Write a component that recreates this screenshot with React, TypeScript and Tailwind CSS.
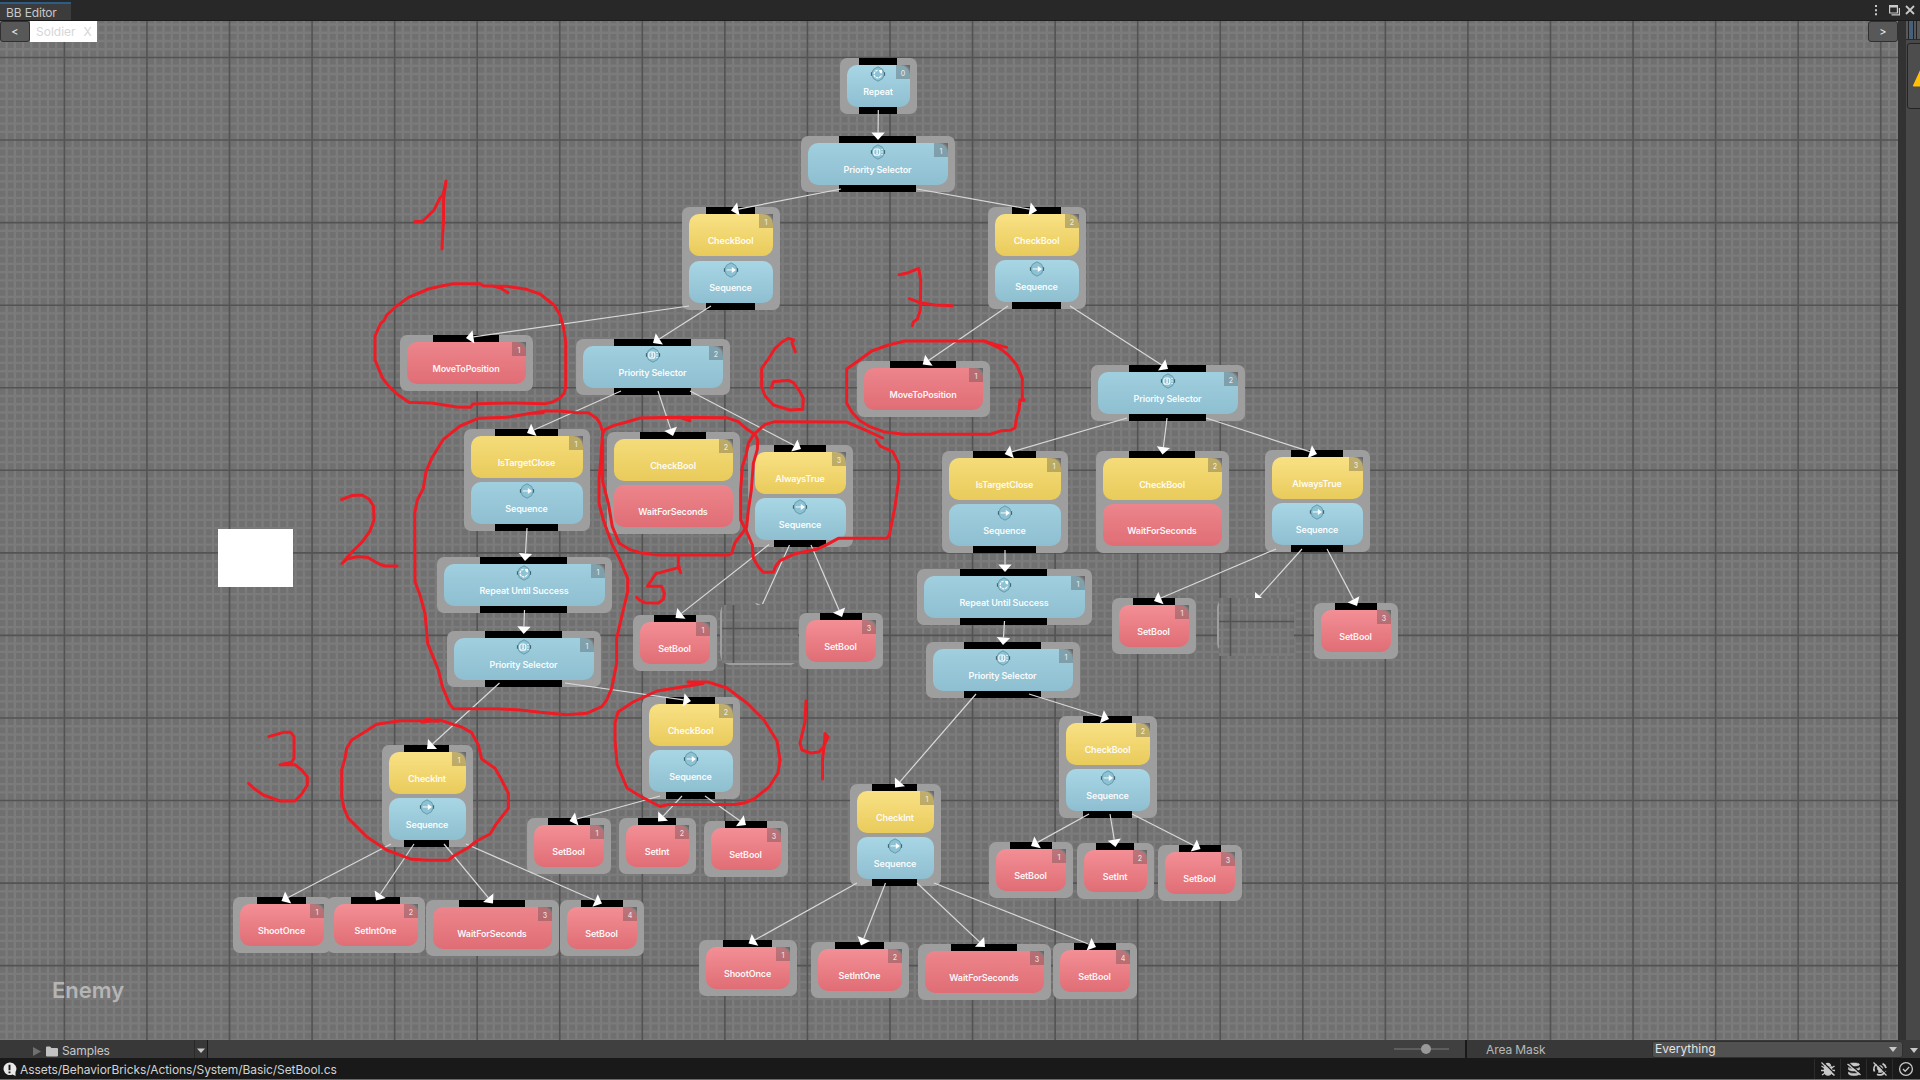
import React from "react";

type Kind = "repeat" | "selector" | "sequence";
type Block = { label: string; tone: "blue" | "yellow" | "red"; icon?: Kind };
type TreeNode = { x: number; y: number; w: number; n: number; blocks: Block[]; out?: boolean; gap?: number };

const CELL = 82.56;
const GRID_X = 64.4;
const GRID_Y = 57.5;

const rep: Block = { label: "Repeat", tone: "blue", icon: "repeat" };
const sel: Block = { label: "Priority Selector", tone: "blue", icon: "selector" };
const rus: Block = { label: "Repeat Until Success", tone: "blue", icon: "repeat" };
const seq: Block = { label: "Sequence", tone: "blue", icon: "sequence" };
const cond = (label: string): Block => ({ label, tone: "yellow" });
const act = (label: string): Block => ({ label, tone: "red" });

const nodes: TreeNode[] = [
  { x: 840, y: 58, w: 77, n: 0, blocks: [rep], out: true },
  { x: 801, y: 136, w: 154, n: 1, blocks: [sel], out: true },
  { x: 682, y: 207, w: 98, n: 1, blocks: [cond("CheckBool"), seq], out: true, gap: 5 },
  { x: 988, y: 207, w: 98, n: 2, blocks: [cond("CheckBool"), seq], out: true },
  { x: 400, y: 335, w: 133, n: 1, blocks: [act("MoveToPosition")] },
  { x: 576, y: 339, w: 154, n: 2, blocks: [sel], out: true },
  { x: 464, y: 429, w: 126, n: 1, blocks: [cond("IsTargetClose"), seq], out: true },
  { x: 607, y: 432, w: 133, n: 2, blocks: [cond("CheckBool"), act("WaitForSeconds")] },
  { x: 748, y: 445, w: 105, n: 3, blocks: [cond("AlwaysTrue"), seq], out: true },
  { x: 437, y: 557, w: 175, n: 1, blocks: [rus], out: true },
  { x: 447, y: 631, w: 154, n: 1, blocks: [sel], out: true },
  { x: 633, y: 615, w: 84, n: 1, blocks: [act("SetBool")] },
  { x: 799, y: 613, w: 84, n: 3, blocks: [act("SetBool")] },
  { x: 642, y: 697, w: 98, n: 2, blocks: [cond("CheckBool"), seq], out: true },
  { x: 382, y: 745, w: 91, n: 1, blocks: [cond("CheckInt"), seq], out: true },
  { x: 233, y: 897, w: 98, n: 1, blocks: [act("ShootOnce")] },
  { x: 327, y: 897, w: 98, n: 2, blocks: [act("SetIntOne")] },
  { x: 426, y: 900, w: 133, n: 3, blocks: [act("WaitForSeconds")] },
  { x: 560, y: 900, w: 84, n: 4, blocks: [act("SetBool")] },
  { x: 527, y: 818, w: 84, n: 1, blocks: [act("SetBool")] },
  { x: 619, y: 818, w: 77, n: 2, blocks: [act("SetInt")] },
  { x: 704, y: 821, w: 84, n: 3, blocks: [act("SetBool")] },
  { x: 857, y: 361, w: 133, n: 1, blocks: [act("MoveToPosition")] },
  { x: 1091, y: 365, w: 154, n: 2, blocks: [sel], out: true },
  { x: 942, y: 451, w: 126, n: 1, blocks: [cond("IsTargetClose"), seq], out: true },
  { x: 1096, y: 451, w: 133, n: 2, blocks: [cond("CheckBool"), act("WaitForSeconds")] },
  { x: 1265, y: 450, w: 105, n: 3, blocks: [cond("AlwaysTrue"), seq], out: true },
  { x: 917, y: 569, w: 175, n: 1, blocks: [rus], out: true },
  { x: 926, y: 642, w: 154, n: 1, blocks: [sel], out: true },
  { x: 1112, y: 598, w: 84, n: 1, blocks: [act("SetBool")] },
  { x: 1314, y: 603, w: 84, n: 3, blocks: [act("SetBool")] },
  { x: 1059, y: 716, w: 98, n: 2, blocks: [cond("CheckBool"), seq], out: true },
  { x: 850, y: 784, w: 91, n: 1, blocks: [cond("CheckInt"), seq], out: true },
  { x: 989, y: 842, w: 84, n: 1, blocks: [act("SetBool")] },
  { x: 1077, y: 843, w: 77, n: 2, blocks: [act("SetInt")] },
  { x: 1158, y: 845, w: 84, n: 3, blocks: [act("SetBool")] },
  { x: 699, y: 940, w: 98, n: 1, blocks: [act("ShootOnce")] },
  { x: 811, y: 942, w: 98, n: 2, blocks: [act("SetIntOne")] },
  { x: 918, y: 944, w: 133, n: 3, blocks: [act("WaitForSeconds")] },
  { x: 1053, y: 943, w: 84, n: 4, blocks: [act("SetBool")] },
];

const edges: number[][] = [
  [878.3, 110, 878, 140],
  [841, 189, 731, 210.5],
  [917, 189, 1037, 210.5],
  [689, 306, 466, 338],
  [711, 306, 653, 343],
  [1008, 306, 922.7, 364.5],
  [1070, 306, 1168, 369],
  [621, 391, 527, 433],
  [658, 391, 673, 436],
  [690, 391, 801, 449],
  [1127, 418, 1004.7, 454],
  [1167, 418, 1162.5, 454.5],
  [1206, 418, 1317, 454],
  [527, 528, 525, 561],
  [524.5, 610, 523.7, 634],
  [499.5, 683, 427, 749],
  [565, 683, 691, 701],
  [1005, 550, 1005, 572],
  [1004.5, 621, 1003, 645],
  [976, 694, 895, 787.5],
  [1029, 694, 1109, 719],
  [769, 544.5, 675.5, 618],
  [811, 545, 842, 617],
  [1276, 549, 1154, 601],
  [1327, 549, 1357, 606],
  [391, 844, 281.5, 901],
  [414, 844, 376, 900.5],
  [444, 844, 493, 903.5],
  [466, 844, 602, 903.5],
  [660, 796, 569.5, 821],
  [682, 796, 658, 821.5],
  [705, 796, 746, 825],
  [1089, 814, 1031, 846],
  [1110, 814, 1115.5, 847],
  [1132, 814, 1200.5, 849],
  [857, 883, 748.5, 943.5],
  [885.5, 883, 861, 945.5],
  [917, 883, 985, 947],
  [934, 883, 1096, 947],
];

const inks: { o: [number, number]; s: number; p: string[] }[] = [
  {
    o: [0, 0],
    s: 1,
    p: [
      "415,221.5 422,221.5 427,217 434,210 438,202 440,198 443,195 446,181 443.5,200 443.5,222 442.5,236 442,249",
      "341.6,499.5 352,495.5 362,495 369,499 373.5,506 374,520 370,531 362,542 351,553 342,563.5 347,559 358,556.5 368,557.5 379,564 385,566 397,566",
      "703,683.5 688,682 708,682 727,688 747,703 764,720 777,741 780,760 778,773 769,787 754,799 744,803 735,804.5 700,804.5 668,804.5 660,806.5 640,796 627,788 617,764 615,740 615,723 618,712 633,702 657,691 688,686 703,683.5",
      "806,701 805,722 800,743 802,750 811,753 819,752 823.5,747 828,737 825,733.5 824.5,742 822.5,760 822.5,779",
    ],
  },
  {
    o: [360, 160],
    s: 1 / 3,
    p: [
      "444,398 425,386 400,378 370,377 360,371 280,371 240,379 205,387 170,402 145,412 110,438 80,465 72,482 62,490 45,528 45,600 68,655 90,683 115,705 147,727 215,729 290,741 332,742 338,732 400,730 470,729 555,731 580,725 600,714 612,700 617,683 617,545 610,500 600,465 582,435 540,402 500,388 440,379 400,379",
      "1306,575 1296,548 1301,540 1285,535 1265,547 1245,565 1225,597 1205,625 1205,680 1215,707 1240,735 1290,750 1328,748 1330,715 1318,692 1300,668 1285,661 1240,665 1234,683",
    ],
  },
  {
    o: [400, 420],
    s: 1 / 3,
    p: [
      "430,-22 400,-20 440,-28 480,-27 530,-22 565,-22 590,-5 600,10 608,35 603,110 597,180 597,250 610,300 635,370 660,420 683,475 683,515 665,590 650,655 650,730 635,805 620,840 605,860 560,880 500,884 420,877 360,870 290,866 160,866 148,850 127,800 115,750 83,670 75,580 60,525 45,485 44,280 52,240 70,205 78,155 95,115 130,58 180,18 235,-5 320,-8 380,-18 440,-28",
      "870,2 850,-7",
      "835,410 835,440 842,458",
      "838,442 780,458 768,460 755,480 742,499 785,499 793,520 790,538 775,549 735,548 720,541 710,532",
      "608,60 608,185 625,250 637,320 657,368",
    ],
  },
  {
    o: [620, 380],
    s: 1 / 3,
    p: [
      "-52,160 -45,148 -20,137 20,126 60,114 170,112 320,113 355,125 380,147 405,163 413,180 412,208 400,250 394,330 385,390 380,440 370,455 345,488 335,520 325,525 115,525 60,518 30,509 -4,488",
      "208,122 180,112",
      "788,174 740,152 680,126 465,125 435,133 400,165 385,190 378,225 367,260 362,330 362,420 380,455 397,495 400,535 415,560 430,577 460,577 467,558 480,542 525,521 590,508 622,493 655,475 800,475 808,465 816,425 825,380 836,300 836,250 818,215 780,198 768,180",
    ],
  },
  {
    o: [820, 260],
    s: 1 / 3,
    p: [
      "237,44 265,38 296,25 302,60 301,150 292,178 280,186 277,197",
      "268,116 300,128 345,135 397,137",
      "560,262 520,252 490,242 440,243 255,243 205,255 155,273 115,302 80,327 80,430 95,455 120,482 150,500 190,515 250,523 510,523 545,512 570,511 585,504 590,470 597,450 600,420 613,421 607,415 607,355 590,315 565,285 540,265 490,242",
    ],
  },
  {
    o: [220, 680],
    s: 1 / 3,
    p: [
      "146,170 190,157 212,157 222,170 222,235 215,247 180,254 225,254 245,270 262,290 262,315 245,342 225,363 180,363 130,345 105,328 86,310",
      "660,120 605,126 620,118 655,124 625,122 540,122 470,133 435,155 395,180 380,205 375,235 365,270 365,350 372,385 385,415 440,470 500,510 575,538 625,541 685,541 700,528 745,503 770,483 810,462 830,430 865,385 865,340 845,300 825,265 785,237 775,195 755,158 725,141 690,130 660,120",
    ],
  },
];

const tones = {
  blue: "bg-linear-to-b from-[#a8d6e5] to-[#8ebfd0]",
  yellow: "bg-linear-to-b from-[#f9e184] to-[#e9cb5b]",
  red: "bg-linear-to-b from-[#f38f96] to-[#e06d75]",
};

const wideTones = {
  blue: "bg-linear-to-b from-[#a0cfdf] to-[#8ebfd0]",
  yellow: "bg-linear-to-b from-[#f5dc79] to-[#e9cb5b]",
  red: "bg-linear-to-b from-[#ed858c] to-[#e06d75]",
};

function BlockIcon({ kind }: { kind: Kind }) {
  return (
    <svg width="16" height="16" viewBox="0 0 16 16" className="absolute left-1/2 top-[1px] -ml-[8.5px]">
      <path d="M8 .8 L12.6 3.4 L14.4 8 L12.6 12.6 L8 15.2 L3.4 12.6 L1.6 8 L3.4 3.4Z" fill="#8cc2d4" stroke="#6195a6" strokeWidth=".9" />
      <path d="M1.4 6.2v3.6M14.6 6.2v3.6" stroke="#3c5f6c" strokeWidth="1" />
      {kind === "sequence" && (
        <g fill="#fff">
          <rect x="3.6" y="7.4" width="6" height="1.1" opacity=".85" />
          <path d="M8.8 5v6L13 8z" />
        </g>
      )}
      {kind === "repeat" && (
        <g>
          <path d="M7.6 4.4A3.7 3.7 0 1 0 11.4 9" fill="none" stroke="#f4fbfd" strokeWidth="1.3" strokeDasharray="2.4 .7" />
          <path d="M8.8 4h3.2v3.4L10 7z" fill="#fff" />
        </g>
      )}
      {kind === "selector" && (
        <g fill="none" stroke="#f4fbfd">
          <rect x="3.8" y="5" width="6" height="6.2" rx="2" strokeWidth="1.2" />
          <path d="M5.8 7h2M6 9.2h2M7.2 5v5" strokeWidth=".9" />
          <path d="M11 5.4h2M11 8h2M11 10.6h2" strokeWidth="1" strokeOpacity=".75" />
        </g>
      )}
    </svg>
  );
}

function NodeView({ node }: { node: TreeNode }) {
  const palette = node.w > 120 ? wideTones : tones;
  const port = { width: Math.floor(node.w / 2), marginLeft: Math.floor(node.w / 4) - 7 };
  return (
    <div
      className="absolute flex flex-col rounded-[7px] bg-[#9e9e9e] px-[7px]"
      style={{ left: node.x, top: node.y, width: node.w }}
    >
      <div className="h-[7px] bg-black" style={port} />
      <div className="flex flex-col" style={{ gap: node.gap ?? 4 }}>
        {node.blocks.map((b, i) => (
          <div key={i} className={"relative h-[42px] rounded-[10px] " + palette[b.tone]}>
            {b.icon && <BlockIcon kind={b.icon} />}
            <div className="absolute inset-x-0 top-[20px] pr-[1px] text-center text-[9px] leading-[14px] font-semibold tracking-[-0.15px] whitespace-nowrap text-white/95">
              {b.label}
            </div>
            {i === 0 && (
              <div className="absolute right-0 top-0 h-[14px] w-[14px] bg-[#3c3c3c]/30">
                <svg width="5" height="5" className="absolute right-0 top-0">
                  <path d="M0 0h5v5Q4 1.500 0 0Z" fill="#5b5b5b" fillOpacity=".6" />
                </svg>
                <div className="absolute left-[2px] top-[4px] w-[10px] text-center text-[7px] leading-[9px] font-medium text-white/75">
                  {node.n}
                </div>
              </div>
            )}
          </div>
        ))}
      </div>
      <div className={"h-[7px] " + (node.out ? "bg-black" : "")} style={port} />
    </div>
  );
}

function GridLines({ x0, y0, x1, y1, gx, gy }: { x0: number; y0: number; x1: number; y1: number; gx: number; gy: number }) {
  const step = CELL / 10;
  const minorV: number[] = [];
  const minorH: number[] = [];
  const majorV: number[] = [];
  const majorH: number[] = [];
  for (let i = Math.ceil((x0 - gx) / step); gx + i * step < x1; i++) (i % 10 === 0 ? majorV : minorV).push(gx + i * step);
  for (let i = Math.ceil((y0 - gy) / step); gy + i * step < y1; i++) (i % 10 === 0 ? majorH : minorH).push(gy + i * step);
  return (
    <g>
      <rect x={x0} y={y0} width={x1 - x0} height={y1 - y0} fill="#717071" />
      <path d={minorV.map((x) => `M${x.toFixed(2)} ${y0}V${y1}`).join("")} stroke="#7b7c7b" strokeWidth="2.300" />
      <path d={minorH.map((y) => `M${x0} ${y.toFixed(2)}H${x1}`).join("")} stroke="#7c7b7c" strokeWidth="2.300" />
      <path
        d={majorV.map((x) => `M${x.toFixed(2)} ${y0}V${y1}`).join("") + majorH.map((y) => `M${x0} ${y.toFixed(2)}H${x1}`).join("")}
        stroke="#545354"
        strokeWidth="1.600"
      />
    </g>
  );
}

function Arrow({ e }: { e: number[] }) {
  const [x1, y1, x2, y2] = e;
  const len = Math.hypot(x2 - x1, y2 - y1);
  const ux = (x2 - x1) / len;
  const uy = (y2 - y1) / len;
  const bx = x2 - ux * 7.5;
  const by = y2 - uy * 7.5;
  return (
    <g>
      <path d={`M${x1} ${y1}L${bx} ${by}`} stroke="#d9d9d9" strokeWidth="1.200" />
      <path d={`M${x2} ${y2}L${bx - uy * 6.7} ${by + ux * 6.7}L${bx + uy * 6.7} ${by - ux * 6.7}Z`} fill="#fff" />
    </g>
  );
}

function Canvas() {
  return (
    <div className="relative h-full w-[1898px] shrink-0 overflow-hidden bg-[#717071]">
      <div className="absolute -top-[21px] left-0 h-[1061px] w-[1898px]">
        <svg width="1898" height="1061" className="absolute inset-0">
          <GridLines x0={0} y0={21} x1={1898} y1={1061} gx={GRID_X} gy={GRID_Y} />
        </svg>
        <div className="absolute left-[52px] top-[976px] text-[22px] leading-[28px] font-semibold text-[#b5b5b5]">Enemy</div>
        {nodes.map((n, i) => (
          <NodeView key={i} node={n} />
        ))}
        <svg width="1898" height="1061" className="absolute inset-0">
          {edges.map((e, i) => (
            <Arrow key={i} e={e} />
          ))}
          <path d="M789.500 545L762.500 604M1302 549L1258 598" stroke="#d9d9d9" strokeWidth="1.200" />
          <path d="M1255 592l7 6h-7zM755 603.500l6 .8-4 .2z" fill="#fff" />
          <path d="M720 612v42q1 6 2 6v-54zM724 663h71l-4 2h-62zM1219 602v47q-2-2-2-6v-36q0-3 2-5z" fill="#9e9e9e" />
          <GridLines x0={722} y0={605} x1={798} y1={663} gx={733.5} gy={628.5} />
          <GridLines x0={1219} y0={598} x1={1294} y1={656} gx={1230.5} gy={621.5} />
          {inks.map((g, i) => (
            <g
              key={i}
              transform={`translate(${g.o[0]} ${g.o[1]}) scale(${g.s})`}
              fill="none"
              stroke="#ed1c24"
              strokeWidth={3 / g.s}
              strokeLinecap="round"
              strokeLinejoin="round"
            >
              {g.p.map((p, j) => (
                <polyline key={j} points={p} />
              ))}
            </g>
          ))}
        </svg>
        <div className="absolute left-[218px] top-[529px] h-[58px] w-[75px] bg-white" />
      </div>
      <div className="relative flex h-[21px] items-start justify-between">
        <div className="flex">
          <div className="flex h-[21px] w-[30px] items-center justify-center rounded-[3px] border border-[#303030] bg-[#585858] pt-[2px] text-[11px] text-[#eee]">&lt;</div>
          <div className="flex h-[21px] w-[67px] items-center gap-[8px] bg-white pl-[6px] text-[12px] text-[#d6d6d6]">
            <span>Soldier</span>
            <span>X</span>
          </div>
        </div>
        <div className="flex h-[21px] w-[30px] items-center justify-center rounded-[3px] border border-[#303030] bg-[#585858] pt-[2px] text-[11px] text-[#eee]">&gt;</div>
      </div>
    </div>
  );
}

function StatusIcon({ children }: { children: React.ReactNode }) {
  return (
    <div className="flex h-full w-[26px] items-center justify-center border-l border-[#2c2c2c]">
      <svg width="16" height="16" viewBox="0 0 16 16" fill="none" stroke="#c8c8c8" strokeWidth="1.300">
        {children}
      </svg>
    </div>
  );
}

export default function App() {
  return (
    <div className="flex h-[1080px] w-[1920px] flex-col overflow-hidden bg-[#282828] font-['Inter',sans-serif] text-[12px] text-[#c8c8c8]">
      <header className="flex h-[21px] shrink-0 items-end justify-between border-b border-[#1c1c1c] bg-[#282828]">
        <div className="flex h-[18px] w-[71px] items-center border-t-2 border-[#2c5d87] bg-[#3c3c3c] pl-[6px] pt-[1px] tracking-[-0.15px] whitespace-nowrap">
          BB Editor
        </div>
        <svg width="50" height="20" viewBox="0 0 50 20" fill="none" stroke="#c8c8c8">
          <path d="M6 5v2M6 9.200v2M6 13.200v2" strokeWidth="2" />
          <path d="M19.600 5.600h7.800v7.400h-7.800z" strokeWidth="1.200" />
          <path d="M19 6.400h9" strokeWidth="2.200" />
          <path d="M29.400 8v6.800H21.500" strokeWidth="1.200" />
          <path d="M36 6l8 8M44 6l-8 8" strokeWidth="1.800" />
        </svg>
      </header>

      <main className="flex h-[1019px] shrink-0">
        <Canvas />
        <div className="w-[8px] bg-[#323232]" />
        <div className="flex w-[14px] flex-col overflow-hidden bg-[#484848]">
          <div className="flex h-[19px] border-b border-[#2a2a2a] bg-[#585858]">
            <div className="ml-[2px] w-[6px] border-x border-[#222] bg-[#46607c]" />
            <div className="ml-[2px] w-px bg-[#222]" />
          </div>
          <div className="mt-[3px] ml-[1px] flex h-[66px] w-[20px] shrink-0 items-center overflow-hidden rounded-l-[3px] border border-[#242424] bg-[#4d4d4d]">
            <svg width="13" height="20" viewBox="0 0 13 20" className="ml-[4px] mt-[4px] shrink-0">
              <path d="M1 17.500 L9 0 H13 V18.500 H2 Q.2 18.500 1 17.500Z" fill="#ffc107" />
            </svg>
          </div>
        </div>
      </main>

      <div className="flex h-[18px] shrink-0 bg-[#383838]">
        <div className="flex w-[194px] items-center pl-[33px] text-[12px]">
          <svg width="8" height="9" viewBox="0 0 8 9" className="mt-[4px]">
            <path d="M0 0L8 4.500L0 9Z" fill="#707070" />
          </svg>
          <svg width="12" height="11" viewBox="0 0 12 11" className="ml-[5px] mt-[4px]">
            <path d="M0 1.500Q0 .5 1 .5H4L5.500 2H11Q12 2 12 3V9.500Q12 10.500 11 10.500H1Q0 10.500 0 9.500Z" fill="#c2c2c2" />
          </svg>
          <span className="ml-[4px] mt-[4px] tracking-[-0.1px]">Samples</span>
        </div>
        <div className="flex w-[14px] items-center justify-center border-x border-[#2a2a2a] border-r-[#191919]">
          <svg width="8" height="5" viewBox="0 0 8 5" className="mt-[2px]">
            <path d="M0 .5H8L4 5Z" fill="#c8c8c8" />
          </svg>
        </div>
        <div className="flex w-[1257px] items-center justify-end bg-[#404040] pr-[16px]">
          <div className="flex h-[2px] w-[55px] items-center bg-[#5e5e5e]">
            <div className="ml-[27px] h-[10px] w-[10px] shrink-0 rounded-full bg-[#999]" />
          </div>
        </div>
        <div className="w-[2px] bg-[#191919]" />
        <div className="flex flex-1 items-center">
          <span className="ml-[19px] mt-[2px] w-[166px] tracking-[-0.1px] text-[#b8b8b8]">Area Mask</span>
          <div className="flex h-[17px] w-[251px] items-center justify-between rounded-[3px] border border-[#303030] bg-[#515151] pr-[5px] pl-[2px] text-[#e4e4e4]">
            <span>Everything</span>
            <svg width="8" height="5" viewBox="0 0 8 5">
              <path d="M0 0H8L4 5Z" fill="#c8c8c8" />
            </svg>
          </div>
          <svg width="8" height="5" viewBox="0 0 8 5" className="ml-[7px] mt-[3px]">
            <path d="M0 0H8L4 5Z" fill="#c8c8c8" />
          </svg>
        </div>
      </div>

      <footer className="flex h-[22px] shrink-0 items-center justify-between border-b border-[#6a6a6a] bg-[#191919]">
        <div className="flex items-center pt-[2px]">
          <svg width="14" height="15" viewBox="0 0 14 15" className="ml-[3px]">
            <path d="M6.500 .5A6.300 6.300 0 1 0 9.500 12.500L12.500 14V10A6.300 6.300 0 0 0 6.500 .5Z" fill="#e8e8e8" />
            <path d="M6.500 2.800v5.400M6.500 9.600v1.700" stroke="#191919" strokeWidth="1.900" />
          </svg>
          <span className="ml-[3px] text-[12px] tracking-[-0.07px] text-[#d2d2d2]">Assets/BehaviorBricks/Actions/System/Basic/SetBool.cs</span>
        </div>
        <div className="flex h-full pt-[1px] pr-[2px]">
          <StatusIcon>
            <path d="M5.500 5a2.500 2.500 0 0 1 5 0M4.500 6h7v4.500a3.500 3.500 0 0 1-7 0z" fill="#c8c8c8" />
            <path d="M1.500 5l3 2M14.500 5l-3 2M1 9.500h4M15 9.500h-4M2 14l3-2M14 14l-3-2" />
            <path d="M3 1l13 13" stroke="#191919" strokeWidth="1.300" />
            <path d="M1.500 1.500l13 13" />
          </StatusIcon>
          <StatusIcon>
            <path d="M2.500 3.500c0-2 11-2 11 0s-11 2-11 0zM2.500 6.500c2 2 9 2 11 0v2c-2 2-9 2-11 0zM2.500 11c2 2 9 2 11 0v2c-2 2-9 2-11 0z" fill="#c8c8c8" strokeWidth=".6" />
            <path d="M2.500 2l13 11" stroke="#191919" strokeWidth="1.300" />
            <path d="M1.500 3l13 11" />
          </StatusIcon>
          <StatusIcon>
            <path d="M13.500 10A6 6 0 0 1 5 13.200M2.500 10.500A6 6 0 0 1 5 2.800M10.500 2.600A6 6 0 0 1 14 7" strokeWidth="1.800" />
            <path d="M8 4.500a2.700 2.700 0 0 1 1.500 5v2h-3v-2a2.700 2.700 0 0 1 1.500-5z" fill="#c8c8c8" strokeWidth=".5" />
            <path d="M3 1l13 13" stroke="#191919" strokeWidth="1.300" />
            <path d="M1.500 1.500l13 13" />
          </StatusIcon>
          <StatusIcon>
            <circle cx="8" cy="8" r="6.400" />
            <path d="M5 8l2.200 2.200L11.200 6" />
          </StatusIcon>
        </div>
      </footer>
    </div>
  );
}
